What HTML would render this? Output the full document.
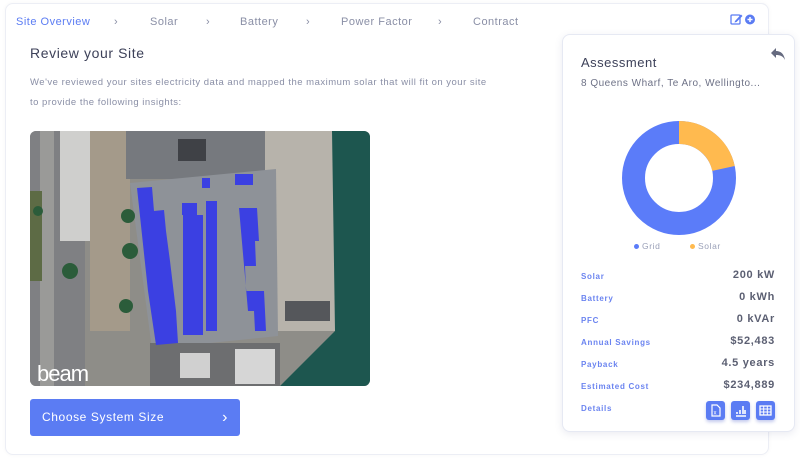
<!DOCTYPE html>
<html><head><meta charset="utf-8"><style>
*{margin:0;padding:0;box-sizing:border-box}
body{width:800px;height:463px;background:#fff;font-family:"Liberation Sans",sans-serif;position:relative;overflow:hidden;letter-spacing:.3px}
.main{position:absolute;left:5px;top:3px;width:764px;height:452px;border:1px solid #eceef5;border-radius:8px;background:#fff;box-shadow:0 0 4px rgba(0,0,0,.04)}
.nav{position:absolute;top:16px;font-size:11px;color:#8a8fa6;letter-spacing:.5px}
.t{position:absolute;color:#3d4159}
.card{position:absolute;left:562px;top:34px;width:233px;height:398px;border:1px solid #e6e9f3;border-radius:8px;background:#fff;box-shadow:0 2px 8px rgba(80,90,140,.12)}
.lbl{position:absolute;left:18px;font-size:8px;color:#6b84f0;font-weight:bold;letter-spacing:.7px}
.val{position:absolute;right:19px;font-size:11px;color:#4a4e63;letter-spacing:.7px;font-weight:bold;opacity:.9}
.ib{position:absolute;top:366px;width:19px;height:19px;background:#5b7cf3;border-radius:3px;box-shadow:0 2px 3px rgba(60,80,200,.3)}
</style></head><body>
<div class="main"></div>
<div class="nav" style="left:16px;color:#5b7cf3">Site Overview</div>
<div class="nav" style="left:114px">›</div>
<div class="nav" style="left:150px">Solar</div>
<div class="nav" style="left:206px">›</div>
<div class="nav" style="left:240px">Battery</div>
<div class="nav" style="left:306px">›</div>
<div class="nav" style="left:341px">Power Factor</div>
<div class="nav" style="left:438px">›</div>
<div class="nav" style="left:473px">Contract</div>
<svg style="position:absolute;left:730px;top:13px" width="27" height="13" viewBox="0 0 27 13"><rect x="1" y="2" width="9" height="9" rx="1" fill="none" stroke="#5b7cf3" stroke-width="1.3"/><path d="M5 8 L11 1.5 L12.5 3 L6.5 9 L4.5 9.5Z" fill="#5b7cf3"/><circle cx="20" cy="6.5" r="5" fill="#5b7cf3"/><path d="M20 4v5M17.5 6.5h5" stroke="#fff" stroke-width="1.5"/></svg>
<div class="t" style="left:30px;top:45px;font-size:14px;letter-spacing:.6px">Review your Site</div>
<div class="t" style="left:30px;top:73px;font-size:9.5px;color:#8a8fa6;line-height:20px;width:468px;letter-spacing:.5px">We've reviewed your sites electricity data and mapped the maximum solar that will fit on your site to provide the following insights:</div>
<svg style="position:absolute;left:30px;top:131px;border-radius:6px" width="340" height="255" viewBox="0 0 340 255">
<rect width="340" height="255" fill="#8e8d88"/>
<rect x="0" y="0" width="55" height="255" fill="#7f8083"/>
<rect x="10" y="0" width="14" height="255" fill="#9a9a98"/>
<rect x="0" y="60" width="12" height="90" fill="#5d6b45"/>
<rect x="30" y="0" width="45" height="110" fill="#cfcfcd"/>
<rect x="60" y="0" width="40" height="200" fill="#a49a8a"/>
<rect x="96" y="0" width="140" height="48" fill="#76797e"/>
<rect x="148" y="8" width="28" height="22" fill="#3f4146"/>
<rect x="235" y="0" width="70" height="200" fill="#b7b3ab"/>
<path d="M302 0 H340 V255 H250 L305 200 Z" fill="#1d564f"/>
<path d="M100 52 L246 38 L248 205 L122 218 Z" fill="#8e9298"/>
<rect x="120" y="212" width="130" height="43" fill="#6d6e70"/>
<rect x="150" y="222" width="30" height="25" fill="#d0d0d0"/>
<rect x="205" y="218" width="40" height="35" fill="#d6d6d6"/>
<rect x="255" y="170" width="45" height="20" fill="#55575b"/>
<g fill="#3b40e2">
<path d="M107 57 L122 56 L124 80 L134 79 L136 100 L140 130 L146 180 L148 212 L126 214 L118 160 Z"/>
<rect x="152" y="72" width="15" height="12"/>
<rect x="172" y="47" width="8" height="10"/>
<rect x="205" y="43" width="18" height="11"/>
<rect x="153" y="84" width="20" height="120"/>
<rect x="176" y="70" width="11" height="130"/>
<path d="M209 77 L227 77 L229 110 L225 110 L226 135 L215 135 L216 160 L234 160 L236 200 L225 200 L224 180 L218 180 Z"/>
</g>
<g fill="#2b5c3a"><circle cx="98" cy="85" r="7"/><circle cx="100" cy="120" r="8"/><circle cx="96" cy="175" r="7"/><circle cx="40" cy="140" r="8"/><circle cx="8" cy="80" r="5"/></g>
<text x="7" y="250" font-family="Liberation Sans,sans-serif" font-size="22" fill="#fff" letter-spacing="-1">beam</text>
</svg>
<div style="position:absolute;left:30px;top:399px;width:210px;height:37px;background:#5b7cf3;border-radius:3px;color:#fff;font-size:12px;line-height:37px;padding-left:12px;letter-spacing:.6px">Choose System Size<span style="position:absolute;right:12px;font-size:16px">›</span></div>
<div class="card">
<div class="t" style="left:18px;top:20px;font-size:13px;letter-spacing:.5px">Assessment</div>
<svg style="position:absolute;left:207px;top:12px" width="16" height="14" viewBox="0 0 16 14"><path d="M6 1 L1 6 L6 11 V8 C10 8 13 9 15 13 C14 7 11 4 6 4Z" fill="#666b80"/></svg>
<div class="t" style="left:18px;top:43px;font-size:10px;color:#6d7186;letter-spacing:.5px">8 Queens Wharf, Te Aro, Wellingto...</div>
<svg style="position:absolute;left:57px;top:84px" width="118" height="118" viewBox="0 0 118 118"><circle cx="59" cy="59" r="45.5" fill="none" stroke="#5b7cf9" stroke-width="23"/><circle cx="59" cy="59" r="45.5" fill="none" stroke="#ffba4f" stroke-width="23" stroke-dasharray="61.7 300" transform="rotate(-90 59 59)"/></svg>
<div style="position:absolute;left:71px;top:209px;width:5px;height:5px;border-radius:50%;background:#5b7cf9"></div>
<div class="t" style="left:79px;top:206px;font-size:8.5px;color:#9aa0b8;letter-spacing:.6px">Grid</div>
<div style="position:absolute;left:127px;top:209px;width:5px;height:5px;border-radius:50%;background:#ffba4f"></div>
<div class="t" style="left:135px;top:206px;font-size:8.5px;color:#9aa0b8;letter-spacing:.6px">Solar</div>
<div class="lbl" style="top:237px">Solar</div><div class="val" style="top:234px">200 kW</div>
<div class="lbl" style="top:259px">Battery</div><div class="val" style="top:256px">0 kWh</div>
<div class="lbl" style="top:281px">PFC</div><div class="val" style="top:278px">0 kVAr</div>
<div class="lbl" style="top:303px">Annual Savings</div><div class="val" style="top:300px">$52,483</div>
<div class="lbl" style="top:325px">Payback</div><div class="val" style="top:322px">4.5 years</div>
<div class="lbl" style="top:347px">Estimated Cost</div><div class="val" style="top:344px">$234,889</div>
<div class="lbl" style="top:369px">Details</div>
<div class="ib" style="left:143px"><svg width="19" height="19"><path d="M6 4h5l3 3v8H6z" fill="none" stroke="#fff" stroke-width="1.2"/><text x="7.5" y="13.5" font-size="6" fill="#fff" font-family="Liberation Sans">x</text></svg></div>
<div class="ib" style="left:168px"><svg width="19" height="19"><path d="M5 15h10M6 13v-2M9 13V9M12 13V5M14 13v-4" stroke="#fff" stroke-width="1.6"/></svg></div>
<div class="ib" style="left:193px"><svg width="19" height="19"><rect x="4" y="5" width="11" height="9" fill="none" stroke="#fff" stroke-width="1.3"/><path d="M4 8h11M4 11h11M7.7 5v9M11.3 5v9" stroke="#fff" stroke-width="1"/></svg></div>
</div>
</body></html>
